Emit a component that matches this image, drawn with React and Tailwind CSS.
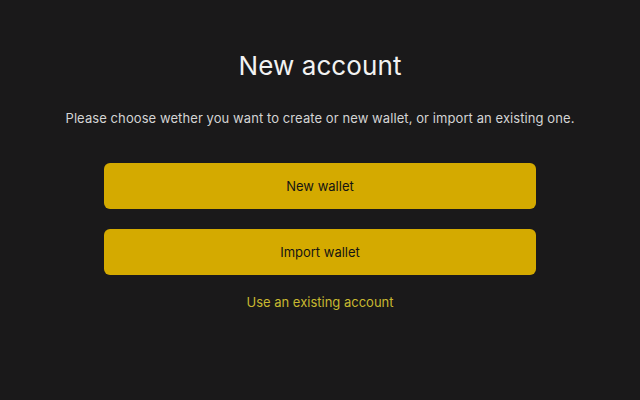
import React from "react";

export default function App() {
  return (
    <main className="w-[640px] h-[400px] bg-[#1a191a] font-['Inter',sans-serif] flex flex-col items-center">
      <h1 className="mt-[49px] text-[26px] leading-[34px] text-[#f2f2f2] font-normal tracking-[0.1px]">New account</h1>
      <p className="mt-[27px] text-[13px] leading-[16px] text-[#d4d4d4] tracking-[0.08px]">
        Please choose wether you want to create or new wallet, or import an existing one.
      </p>
      <div className="mt-[37px] w-[432px] flex flex-col gap-[20px]">
        <button className="h-[46px] pt-[2px] rounded-[6px] bg-[#d4aa00] text-[13px] text-[#141414]">New wallet</button>
        <button className="h-[46px] pt-[2px] rounded-[6px] bg-[#d4aa00] text-[13px] text-[#141414]">Import wallet</button>
      </div>
      <a className="mt-[19px] text-[13px] leading-[16px] text-[#c8b830]">Use an existing account</a>
    </main>
  );
}
